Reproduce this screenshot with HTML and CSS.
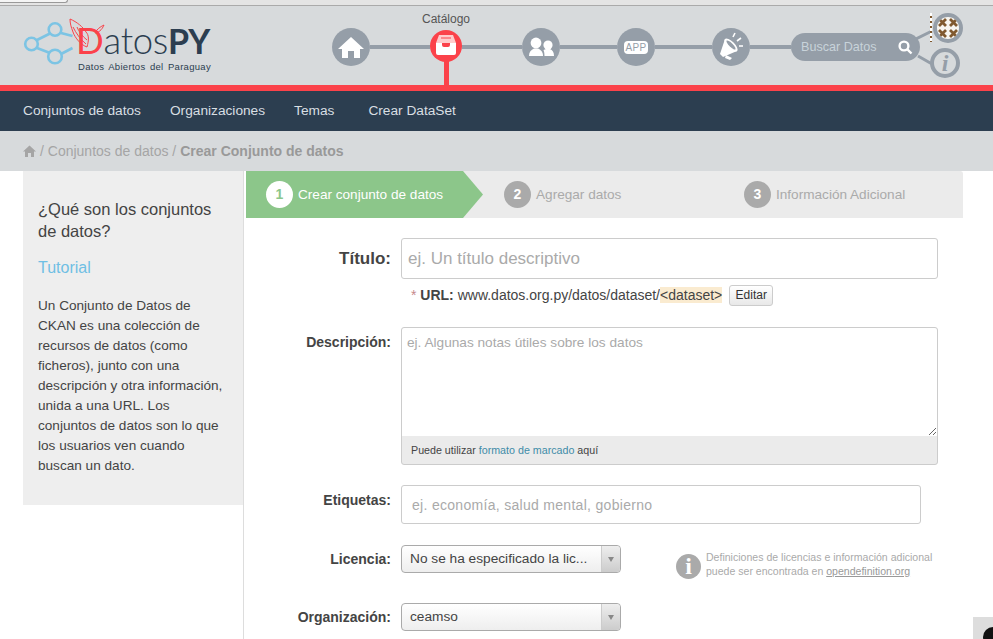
FILE: index.html
```html
<!DOCTYPE html>
<html lang="es">
<head>
    <meta charset="UTF-8">
    <meta name="viewport" content="width=device-width, initial-scale=1.0">
    <title>Crear Conjunto de datos - DatosPY</title>
    <link rel="stylesheet" href="styles.css">
</head>
<body>
    <div class="topstrip"><div class="topstrip-tab"></div></div>

    <header class="masthead">
        <a class="logo" href="#">
            <svg class="logo-net" width="60" height="50" viewBox="0 0 60 50" fill="none" stroke="#7cc4e4" stroke-width="2.6">
                <circle cx="8.5" cy="25" r="6.3"/>
                <circle cx="32" cy="10.5" r="6.3"/>
                <circle cx="32" cy="37.5" r="6.8"/>
                <path d="M14 21 L27 14.5 M14 29 L27 34 M38 14 L49.5 17 M38 35 L49.5 29"/>
            </svg>
            <div class="logo-words">
                <div class="logo-name"><span class="logo-d">D</span>atos<b>PY</b></div>
                <div class="logo-tag">Datos Abiertos del Paraguay</div>
            </div>
            <svg class="logo-wings" width="40" height="32" viewBox="0 0 40 32" fill="none" stroke="#f9434a" stroke-width="1">
                <path d="M1 1 C8 4 14 9 17 14 C20 17 20 22 18 29 C12 27 6 20 4 14 C2 9 1 5 1 1 Z"/>
                <path d="M4 9 C7 15 11 21 17 26 M8 9 C10 14 13 18 18 22"/>
                <path d="M35 7 C31 9 28 11 26 15 C29 15 33 12 35 7 Z"/>
            </svg>
        </a>

        <nav class="track">
            <a class="node" href="#">
                <svg width="38" height="38" viewBox="0 0 38 38" fill="#fff"><path d="M19 9 L32 21 H28 V30 H22 V23 H16 V30 H10 V21 H6 Z"/></svg>
            </a>
            <span class="link"></span>
            <a class="node node-active" href="#">
                <span class="node-label">Catálogo</span>
                <svg width="32" height="32" viewBox="0 0 32 32">
                    <path d="M9 5 H23 L26 13 H6 Z" fill="#fcc" />
                    <path d="M11 8 H21" stroke="#f9434a" stroke-width="1"/>
                    <path d="M6 13 H12 V15 Q12 17 14 17 H18 Q20 17 20 15 V13 H26 V23 Q26 25 24 25 H8 Q6 25 6 23 Z" fill="#fff"/>
                </svg>
            </a>
            <span class="link"></span>
            <a class="node" href="#">
                <svg width="38" height="38" viewBox="0 0 38 38" fill="#fff">
                    <circle cx="14" cy="15" r="5.4"/>
                    <path d="M7 28 C7 24 9 22 12 20.5 H16 C19 22 21 24 21 28 Z"/>
                    <circle cx="26" cy="17" r="4.6"/>
                    <path d="M22.5 28 C22.5 25 22 23 21.5 22 L24 21 H28 C30.5 22 32 24 32 28 Z"/>
                </svg>
            </a>
            <span class="link link-short"></span>
            <a class="node" href="#"><span class="app-badge">APP</span></a>
            <span class="link link-short"></span>
            <a class="node" href="#">
                <svg width="38" height="38" viewBox="0 0 38 38">
                    <path d="M13 11 L25 23 L11 29 L8 26 Z" fill="#fff"/>
                    <ellipse cx="19" cy="17" rx="3.6" ry="8.6" transform="rotate(-45 19 17)" fill="#fff"/>
                    <ellipse cx="19" cy="17" rx="1.9" ry="6.2" transform="rotate(-45 19 17)" fill="#959ea8"/>
                    <path d="M14 27 L20 30 L18 32 L13 30 Z" fill="#fff"/>
                    <path d="M21 9 L23 5 M25 13 L29 10 M27 18 L31 18" stroke="#fff" stroke-width="1.6" fill="none"/>
                </svg>
            </a>
            <span class="link link-last"></span>
            <div class="search">
                <span>Buscar Datos</span>
                <svg width="16" height="16" viewBox="0 0 16 16" fill="none" stroke="#fff" stroke-width="2.4"><circle cx="7" cy="7" r="4.4"/><path d="M10.4 10.4 L14.5 14.5"/></svg>
            </div>
        </nav>

        <svg class="side-links" width="60" height="60" viewBox="0 0 60 60" stroke="#959ea8" stroke-width="3" fill="none">
            <path d="M0 21 L16 13 M2 38 L16 46"/>
        </svg>
        <div class="avatar">
            <svg width="22" height="22" viewBox="0 0 22 22" fill="none" stroke="#80592f" stroke-width="2.8">
                <path d="M2 2 L9 9 M9 2 L2 9 M13 2 L20 9 M20 2 L13 9 M2 13 L9 20 M9 13 L2 20 M13 13 L20 20 M20 13 L13 20"/>
            </svg>
        </div>
        <span class="avatar-strip"></span>
        <div class="info-round">i</div>
    </header>

    <nav class="mainnav">
        <a href="#">Conjuntos de datos</a>
        <a href="#">Organizaciones</a>
        <a href="#">Temas</a>
        <a class="mainnav-last" href="#">Crear DataSet</a>
    </nav>

    <div class="crumbs">
        <svg width="13" height="12" viewBox="0 0 13 12" fill="#a5a5a5"><path d="M6.5 0.5 L13 6.5 H11 V12 H8 V8 H5 V12 H2 V6.5 H0 Z"/></svg>
        <span>/ Conjuntos de datos /</span>
        <b>Crear Conjunto de datos</b>
    </div>

    <div class="content">
        <div class="side-col">
            <aside class="sidebar">
                <h2>¿Qué son los conjuntos de datos?</h2>
                <a class="tutorial" href="#">Tutorial</a>
                <p>Un Conjunto de Datos de CKAN es una colección de recursos de datos (como ficheros), junto con una descripción y otra información, unida a una URL. Los conjuntos de datos son lo que los usuarios ven cuando buscan un dato.</p>
            </aside>
        </div>

        <main class="main">
            <ol class="steps">
                <li class="step step-on"><span class="step-num">1</span>Crear conjunto de datos</li>
                <li class="step"><span class="step-num">2</span>Agregar datos</li>
                <li class="step"><span class="step-num">3</span>Información Adicional</li>
            </ol>

            <form class="form">
                <div class="row row-title">
                    <label>Título:</label>
                    <input class="title-input" type="text" placeholder="ej. Un título descriptivo">
                </div>
                <div class="url-line">
                    <span><span class="req">*</span> <b>URL:</b> www.datos.org.py/datos/dataset/<span class="slug">&lt;dataset&gt;</span></span>
                    <button class="btn-edit" type="button">Editar</button>
                </div>

                <div class="row row-desc">
                    <label>Descripción:</label>
                    <div class="desc-box">
                        <textarea placeholder="ej. Algunas notas útiles sobre los datos"></textarea>
                        <div class="desc-foot">Puede utilizar <a href="#">formato de marcado</a> aquí</div>
                    </div>
                </div>

                <div class="row row-tags">
                    <label>Etiquetas:</label>
                    <input class="tags-input" type="text" placeholder="ej. economía, salud mental, gobierno">
                </div>

                <div class="row row-lic">
                    <label>Licencia:</label>
                    <div class="select"><span>No se ha especificado la lic...</span><i></i></div>
                    <div class="lic-info">
                        <span class="lic-icon">i</span>
                        <p>Definiciones de licencias e información adicional<br>puede ser encontrada en <a href="#">opendefinition.org</a></p>
                    </div>
                </div>

                <div class="row row-org">
                    <label>Organización:</label>
                    <div class="select"><span>ceamso</span><i></i></div>
                </div>
            </form>
        </main>
    </div>

    <div class="corner-tab"><span></span></div>
</body>
</html>
```

FILE: styles.css
```css
html, body {
    height: 100%;
    overflow: hidden;
}
body {
    margin: 0;
    font-family: "Liberation Sans", Arial, sans-serif;
    font-size: 14px;
    color: #444;
    background: #fff;
    display: flex;
    flex-direction: column;
}
a {
    text-decoration: none;
    color: inherit;
}

/* top strip */
.topstrip {
    height: 5px;
    background: #e4e4e4;
    border-bottom: 1px solid #aaa;
}
.topstrip-tab {
    width: 67px;
    height: 2px;
    background: #f4f4f4;
    border: 1px solid #999;
    border-top: none;
    border-left: none;
    border-radius: 0 0 3px 0;
}

/* header */
.masthead {
    position: relative;
    height: 79px;
    flex-shrink: 0;
    background: #d7dadc;
    border-bottom: 6px solid #fb424a;
    display: flex;
}
.logo {
    position: relative;
    width: 332px;
    flex-shrink: 0;
    display: flex;
    align-items: flex-start;
    padding: 13px 0 0 23px;
    box-sizing: border-box;
}
.logo-net {
    flex-shrink: 0;
    margin-right: -7px;
}
.logo-words {
    padding-top: 1px;
}
.logo-name {
    font-family: Lato, sans-serif;
    font-size: 36.5px;
    font-weight: 300;
    line-height: 41px;
    color: #2c3e50;
    letter-spacing: -0.3px;
}
.logo-name b {
    font-weight: 700;
    font-size: 34px;
}
.logo-d {
    color: #fb424a;
    font-weight: 400;
}
.logo-tag {
    padding-left: 2px;
    font-size: 9.5px;
    line-height: 12px;
    letter-spacing: 0.3px;
    word-spacing: 1.5px;
    color: #2c3e50;
    white-space: nowrap;
}
.logo-wings {
    position: absolute;
    left: 69px;
    top: 12px;
}

/* icon track */
.track {
    display: flex;
    align-items: center;
    height: 38px;
    margin-top: 22px;
}
.node {
    position: relative;
    width: 38px;
    height: 38px;
    border-radius: 50%;
    background: #959ea8;
    flex-shrink: 0;
    display: flex;
    align-items: center;
    justify-content: center;
}
.node svg {
    display: block;
}
.node-active {
    width: 32px;
    height: 32px;
    margin-bottom: 2px;
    background: #fb424a;
}
.node-active::after {
    content: "";
    position: absolute;
    left: 14px;
    top: 30px;
    width: 5px;
    height: 25px;
    background: #fb424a;
}
.node-label {
    position: absolute;
    top: -18px;
    left: 50%;
    transform: translateX(-50%);
    font-size: 12px;
    line-height: 14px;
    color: #555;
}
.link {
    width: 60px;
    height: 4px;
    background: #959ea8;
    flex-shrink: 0;
}
.link-short {
    width: 57px;
}
.link-last {
    width: 41px;
}
.app-badge {
    width: 24px;
    height: 13px;
    line-height: 13px;
    border-radius: 4px;
    background: #fff;
    color: #959ea8;
    font-size: 10px;
    letter-spacing: 0.4px;
    text-align: center;
}
.search {
    width: 129px;
    height: 28px;
    border-radius: 14px;
    background: #959ea8;
    color: #c8d3da;
    font-size: 12.6px;
    display: flex;
    align-items: center;
    justify-content: space-between;
    padding: 0 7px 0 10px;
    box-sizing: border-box;
}
.side-links {
    position: absolute;
    left: 916px;
    top: 12px;
}
.avatar {
    position: absolute;
    left: 933px;
    top: 7px;
    width: 22px;
    height: 22px;
    padding: 0;
    border: 4px solid #959ea8;
    border-radius: 50%;
    background: #f7f5f0;
    overflow: hidden;
}
.avatar svg {
    display: block;
}
.avatar-strip {
    position: absolute;
    left: 930px;
    top: 7px;
    width: 2px;
    height: 29px;
    background: repeating-linear-gradient(#fff 0 3px, #80592f 3px 5px);
}
.info-round {
    position: absolute;
    left: 930px;
    top: 42px;
    width: 22px;
    height: 22px;
    border: 4px solid #959ea8;
    border-radius: 50%;
    text-align: center;
    font-family: "Liberation Serif", serif;
    font-style: italic;
    font-weight: bold;
    font-size: 24px;
    line-height: 22px;
    color: #959ea8;
}

/* navy menu */
.mainnav {
    height: 40px;
    box-sizing: border-box;
    flex-shrink: 0;
    background: #2c3e50;
    display: flex;
    align-items: center;
    gap: 29px;
    padding: 0 0 2px 23px;
}
.mainnav a {
    color: #d9dfe3;
    font-size: 13.7px;
}
.mainnav .mainnav-last {
    margin-left: 5px;
}

/* breadcrumb */
.crumbs {
    height: 40px;
    flex-shrink: 0;
    background: #d7dadc;
    display: flex;
    align-items: center;
    gap: 4px;
    padding-left: 23px;
    color: #a5a5a5;
    font-size: 14px;
}
.crumbs b {
    color: #999;
}

/* page */
.content {
    flex: 1;
    display: flex;
    padding-left: 23px;
    min-height: 0;
}
.side-col {
    width: 220px;
    border-right: 1px solid #ddd;
    flex-shrink: 0;
}
.sidebar {
    height: 334px;
    box-sizing: border-box;
    background: #eee;
    padding: 27px 15px 0;
}
.sidebar h2 {
    margin: 0;
    font-size: 16.5px;
    font-weight: normal;
    line-height: 22px;
    color: #444;
}
.tutorial {
    display: block;
    margin-top: 15px;
    font-size: 16px;
    line-height: 22px;
    color: #6fbfe4;
}
.sidebar p {
    margin: 17px 0 0;
    font-size: 13.6px;
    line-height: 20px;
    color: #444;
}

.main {
    width: 717px;
    margin-left: 2px;
}
.steps {
    list-style: none;
    margin: 0;
    padding: 0;
    height: 47px;
    display: grid;
    grid-template-columns: repeat(3, 239px);
    background: #ebebeb;
    border-radius: 0 3px 0 0;
}
.step {
    display: flex;
    align-items: center;
    gap: 5px;
    padding-left: 20px;
    font-size: 13.6px;
    color: #aaa;
}
.step-num {
    width: 27px;
    height: 27px;
    border-radius: 50%;
    background: #aaa;
    color: #fff;
    font-size: 14px;
    font-weight: bold;
    line-height: 27px;
    text-align: center;
    flex-shrink: 0;
}
.step:nth-child(2) {
    padding-left: 19px;
}
.step-on {
    width: 237px;
    box-sizing: border-box;
    background: #8cc68a;
    color: #fff;
    clip-path: polygon(0 0, 217px 0, 100% 50%, 217px 100%, 0 100%);
}
.step-on .step-num {
    background: #fff;
    color: #8cc68a;
}

/* form */
.form {
    padding-top: 20px;
}
.row {
    display: flex;
    align-items: flex-start;
}
.row label {
    width: 145px;
    margin-right: 10px;
    flex-shrink: 0;
    text-align: right;
    font-weight: bold;
    font-size: 14px;
    color: #444;
}
input, textarea {
    font-family: "Liberation Sans", Arial, sans-serif;
    box-sizing: border-box;
    border: 1px solid #ccc;
    background: #fff;
    outline: none;
    display: block;
}
input::placeholder, textarea::placeholder {
    color: #aaa;
    opacity: 1;
}
.row-title label {
    font-size: 17px;
    line-height: 41px;
}
.title-input {
    width: 537px;
    height: 41px;
    border-radius: 3px;
    padding: 0 6px;
    font-size: 17px;
}
.url-line {
    display: flex;
    align-items: center;
    height: 22px;
    margin: 5px 0 0 165px;
    font-size: 14px;
    color: #444;
}
.req {
    color: #c6898b;
}
.slug {
    background: #faebd0;
}
.btn-edit {
    margin-left: 7px;
    width: 44px;
    height: 21px;
    padding: 0;
    font-family: "Liberation Sans", Arial, sans-serif;
    font-size: 12px;
    color: #333;
    border: 1px solid #ccc;
    border-radius: 3px;
    background: linear-gradient(#fff, #e8e8e8);
}
.row-desc {
    margin-top: 21px;
}
.row-desc label {
    line-height: 30px;
}
.desc-box {
    width: 537px;
    box-sizing: border-box;
    border: 1px solid #ccc;
    border-radius: 3px;
    background: #ebebeb;
}
.desc-box textarea {
    width: 100%;
    height: 108px;
    border: none;
    border-radius: 3px 3px 0 0;
    padding: 7px 5px;
    font-size: 13.65px;
}
.desc-foot {
    height: 28px;
    line-height: 28px;
    padding-left: 9px;
    font-size: 10.7px;
    color: #444;
}
.desc-foot a {
    color: #3f8ba8;
}
.row-tags {
    margin-top: 20px;
}
.row-tags label {
    line-height: 31px;
}
.tags-input {
    width: 520px;
    height: 39px;
    border-radius: 3px;
    padding: 0 10px;
    font-size: 14px;
    letter-spacing: 0.3px;
}
.select {
    position: relative;
    width: 220px;
    height: 28px;
    box-sizing: border-box;
    border: 1px solid #aaa;
    border-radius: 4px;
    background: linear-gradient(#fff, #eee);
    line-height: 26px;
    padding-left: 8px;
    font-size: 13.7px;
    color: #444;
}
.select i {
    position: absolute;
    right: 0;
    top: 0;
    width: 18px;
    height: 26px;
    border-left: 1px solid #ccc;
    border-radius: 0 4px 4px 0;
    background: linear-gradient(#eee, #ccc);
}
.select i::after {
    content: "";
    position: absolute;
    left: 6px;
    top: 11px;
    border: 3.5px solid transparent;
    border-top: 5px solid #888;
    border-bottom: none;
}
.row-lic {
    margin-top: 21px;
}
.row-lic label, .row-org label {
    line-height: 28px;
}
.lic-info {
    display: flex;
    align-items: flex-start;
    gap: 5px;
    margin-left: 55px;
    margin-top: 5px;
}
.lic-icon {
    width: 25px;
    height: 25px;
    margin-top: 4px;
    border-radius: 50%;
    background: #aaa;
    color: #fff;
    font-family: "Liberation Serif", serif;
    font-weight: bold;
    font-size: 24px;
    line-height: 25px;
    text-align: center;
}
.lic-info p {
    margin: 0;
    font-size: 10.55px;
    line-height: 14px;
    color: #aaa;
}
.lic-info a {
    color: #999;
    text-decoration: underline;
}
.row-org {
    margin-top: 24px;
}

/* bottom right chat tab */
.corner-tab {
    position: fixed;
    left: 973px;
    top: 617px;
    width: 20px;
    height: 22px;
    background: #ddd;
    overflow: hidden;
}
.corner-tab span {
    position: absolute;
    left: 10px;
    top: 10px;
    width: 20px;
    height: 20px;
    border-radius: 50%;
    background: #111;
}
```
